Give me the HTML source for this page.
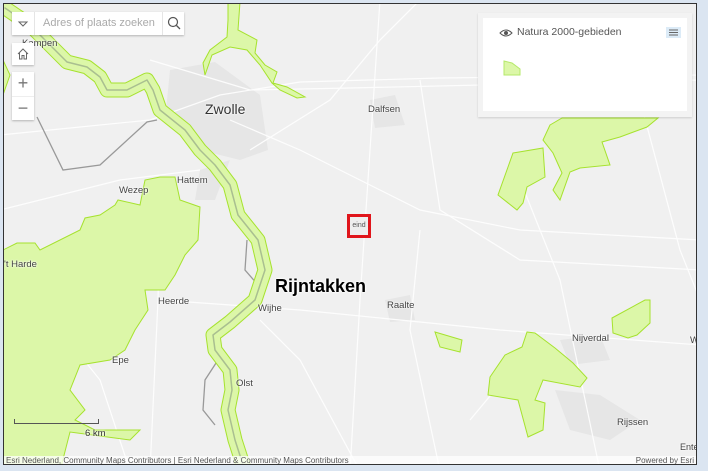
<!DOCTYPE html>
<html><head><meta charset="utf-8"><style>
html,body{margin:0;padding:0;width:708px;height:471px;overflow:hidden;background:#dbe5f1;font-family:"Liberation Sans",sans-serif}
#map{position:absolute;left:3px;top:3px;width:692px;height:460px;border:1px solid #333;background:#f0f0f0;overflow:hidden}
svg{position:absolute;left:-4px;top:-4px}
.lbl{position:absolute;font-size:9.5px;color:#444;text-shadow:0 0 2px #fff,0 0 2px #fff}
.btn{position:absolute;background:#fff;box-shadow:0 1px 2px rgba(0,0,0,.25)}
</style></head><body>
<div id="map">
<svg width="708" height="471" viewBox="0 0 708 471">
<g fill="#e6e6e6">
<path d="M170 70 L215 62 L260 95 L268 150 L240 160 L200 150 L165 120 Z"/>
<path d="M200 170 L230 160 L215 200 L195 200Z"/>
<path d="M555 390 L600 395 L640 420 L610 440 L570 430Z"/>
<path d="M370 100 L395 95 L405 125 L375 128Z"/>
<path d="M560 340 L600 335 L610 360 L570 365Z"/>
<path d="M385 300 L410 295 L415 320 L390 322Z"/>
</g>
<g stroke="#fff" stroke-width="1.2" fill="none" opacity="0.9">
<path d="M0 135 L150 120 L220 95 L300 82 L440 78 L700 75"/>
<path d="M150 60 L250 90 L350 88 L700 80"/>
<path d="M230 120 L300 150 L420 210 L520 230 L700 240"/>
<path d="M380 0 L370 150 L360 300 L350 471"/>
<path d="M160 200 L158 300 L150 471"/>
<path d="M160 300 L300 310 L500 330 L700 345"/>
<path d="M0 210 L120 180 L200 170"/>
<path d="M260 320 L300 360 L360 471"/>
<path d="M420 230 L410 330 L440 471"/>
<path d="M520 180 L560 280 L600 471"/>
<path d="M420 80 L440 210 L520 260 L700 270"/>
<path d="M60 330 L100 380 L130 471"/>
<path d="M250 150 L330 100 L380 40 L420 0"/>
<path d="M640 100 L680 250 L700 300"/>
<path d="M470 420 L520 360"/>
</g>
<g stroke="#999" stroke-width="1.3" fill="none">
<path d="M37 117 L63 170 L100 165 L147 122 L157 120"/>
<path d="M247 240 L245 270 L258 285"/>
<path d="M218 360 L205 380 L203 410 L215 425"/>
</g>
<g fill="#dcf7a8" stroke="#a6e22e" stroke-width="1">
<path d="M3 250 L17 243 L35 243 L40 250 L80 230 L85 218 L100 215 L115 205 L118 200 L140 205 L145 180 L160 177 L175 177 L180 200 L200 207 L198 240 L185 255 L175 275 L165 290 L145 290 L148 310 L135 330 L125 350 L110 360 L80 365 L70 390 L85 410 L75 420 L95 430 L140 430 L130 440 L70 432 L60 471 L3 471 Z"/>
<path d="M228 2 L240 2 L238 30 L257 40 L255 53 L265 65 L277 72 L273 83 L287 87 L305 97 L297 98 L280 90 L272 83 L260 65 L247 50 L230 47 L212 55 L205 75 L203 63 L210 50 L227 37 L228 20 Z"/>
<path d="M550 125 L562 118 L658 118 L647 127 L620 137 L602 142 L610 165 L580 168 L570 172 L560 200 L553 190 L562 173 L553 153 L543 140 Z"/>
<path d="M513 153 L543 148 L545 177 L527 187 L523 203 L517 210 L498 195 L508 167 Z"/>
<path d="M612 318 L645 300 L650 300 L650 323 L637 335 L628 338 L613 333 Z"/>
<path d="M435 332 L462 340 L460 352 L440 347 Z"/>
<path d="M527 332 L535 333 L555 348 L573 363 L587 378 L580 387 L543 380 L535 400 L545 403 L543 430 L528 437 L518 400 L488 395 L490 377 L505 355 L522 347 Z"/>
</g>
<g fill="none" stroke-linejoin="round" stroke-linecap="round">
<path id="rv" d="M5 8 L30 25 L67 62 L87 67 L100 77 L107 90 L127 90 L147 80 L153 90 L160 110 L185 130 L200 150 L215 165 L230 185 L238 215 L258 240 L265 270 L255 300 L230 322 L213 335 L215 350 L230 370 L232 390 L228 410 L235 440 L245 471" stroke="#a6e22e" stroke-width="15"/>
<path d="M5 8 L30 25 L67 62 L87 67 L100 77 L107 90 L127 90 L147 80 L153 90 L160 110 L185 130 L200 150 L215 165 L230 185 L238 215 L258 240 L265 270 L255 300 L230 322 L213 335 L215 350 L230 370 L232 390 L228 410 L235 440 L245 471" stroke-width="13" stroke="#dcf7a8"/>
<path d="M5 8 L30 25 L67 62 L87 67 L100 77 L107 90 L127 90 L147 80 L153 90 L160 110 L185 130 L200 150 L215 165 L230 185 L238 215 L258 240 L265 270 L255 300 L230 322 L213 335 L215 350 L230 370 L232 390 L228 410 L235 440 L245 471" stroke-width="1.5" stroke="#a9bf90"/>
</g>
<path d="M3 60 L10 75 L3 95Z" fill="#dcf7a8" stroke="#a6e22e"/>
</svg>

<div class="lbl" style="left:201px;top:97px;font-size:14px;color:#333">Zwolle</div>
<div class="lbl" style="left:364px;top:100px">Dalfsen</div>
<div class="lbl" style="left:115px;top:181px">Wezep</div>
<div class="lbl" style="left:173px;top:171px">Hattem</div>
<div class="lbl" style="left:0px;top:255px">'t Harde</div>
<div class="lbl" style="left:154px;top:292px">Heerde</div>
<div class="lbl" style="left:254px;top:299px">Wijhe</div>
<div class="lbl" style="left:108px;top:351px">Epe</div>
<div class="lbl" style="left:232px;top:374px">Olst</div>
<div class="lbl" style="left:383px;top:296px">Raalte</div>
<div class="lbl" style="left:568px;top:329px">Nijverdal</div>
<div class="lbl" style="left:686px;top:331px">Wi</div>
<div class="lbl" style="left:613px;top:413px">Rijssen</div>
<div class="lbl" style="left:676px;top:438px;font-size:9px">Enter</div>
<div class="lbl" style="left:18px;top:34px">Kampen</div>
<div style="position:absolute;left:271px;top:272px;font-size:18px;font-weight:bold;color:#000;text-shadow:0 0 2px #fff,0 0 2px #fff,0 0 2px #fff">Rijntakken</div>

<div style="position:absolute;left:343px;top:210px;width:18px;height:18px;border:3px solid #e0151b;background:#eee;font-size:7px;color:#555;line-height:18px;text-align:center">eind</div>

<div class="btn" style="left:8px;top:8px;width:172px;height:23px">
 <div style="position:absolute;left:0;top:0;width:22px;height:23px;border-right:1px solid #e5e5e5"><svg width="22" height="23" style="left:0;top:0"><path d="M7 10 L15 10 L11 14Z" fill="none" stroke="#666"/></svg></div>
 <div style="position:absolute;left:31px;top:5px;font-size:11px;color:#aaa">Adres of plaats zoeken</div>
 <div style="position:absolute;left:150px;top:0;width:22px;height:23px;border-left:1px solid #e5e5e5"><svg width="22" height="23" style="left:0;top:0"><circle cx="10" cy="10" r="4.5" fill="none" stroke="#555" stroke-width="1.2"/><path d="M13.5 13.5 L17 17" stroke="#555" stroke-width="1.3"/></svg></div>
</div>
<div class="btn" style="left:8px;top:39px;width:22px;height:22px"><svg width="22" height="22" style="left:0;top:0"><path d="M6 11 L11 6 L16 11 M7.5 10 V16 H10 V12.5 H12 V16 H14.5 V10" fill="none" stroke="#666"/></svg></div>
<div class="btn" style="left:8px;top:68px;width:22px;height:48px">
 <div style="position:absolute;left:0;top:0;width:22px;height:24px;text-align:center;font-size:18px;line-height:22px;color:#777">+</div>
 <div style="position:absolute;left:0;top:24px;width:22px;height:24px;border-top:1px solid #eee;text-align:center;font-size:18px;line-height:22px;color:#777">−</div>
</div>

<div style="position:absolute;left:474px;top:9px;width:214px;height:104px;background:#f3f3f3;box-shadow:0 1px 2px rgba(0,0,0,.15)">
 <div style="position:absolute;left:5px;top:5px;width:204px;height:93px;background:#fff">
  <svg width="14" height="10" style="left:16px;top:10px"><path d="M1 5 Q7 -1 13 5 Q7 11 1 5Z" fill="none" stroke="#555"/><circle cx="7" cy="5" r="2" fill="#555"/></svg>
  <div style="position:absolute;left:34px;top:8px;font-size:10.5px;color:#555">Natura 2000-gebieden</div>
  <div style="position:absolute;left:183px;top:9px;width:15px;height:11px;background:#dcebf7"><svg width="15" height="11" style="left:0;top:0"><path d="M3 3H12M3 5.5H12M3 8H12" stroke="#666"/></svg></div>
  <svg width="20" height="20" style="left:20px;top:42px"><path d="M1 1 L9 3 L17 9 L17 15 L1 15Z" fill="#dcf7a8" stroke="#b5e86a"/></svg>
 </div>
</div>

<div style="position:absolute;left:10px;top:415px;width:83px;height:4px;border:1.5px solid #555;border-top:none"></div>
<div class="lbl" style="left:81px;top:424px;color:#333">6 km</div>

<div style="position:absolute;left:0;top:452px;width:692px;height:9px;background:rgba(255,255,255,.75);font-size:8px;color:#555;line-height:9px">
 <span style="position:absolute;left:2px">Esri Nederland, Community Maps Contributors | Esri Nederland &amp; Community Maps Contributors</span>
 <span style="position:absolute;right:2px">Powered by Esri</span>
</div>
</div>
</body></html>
